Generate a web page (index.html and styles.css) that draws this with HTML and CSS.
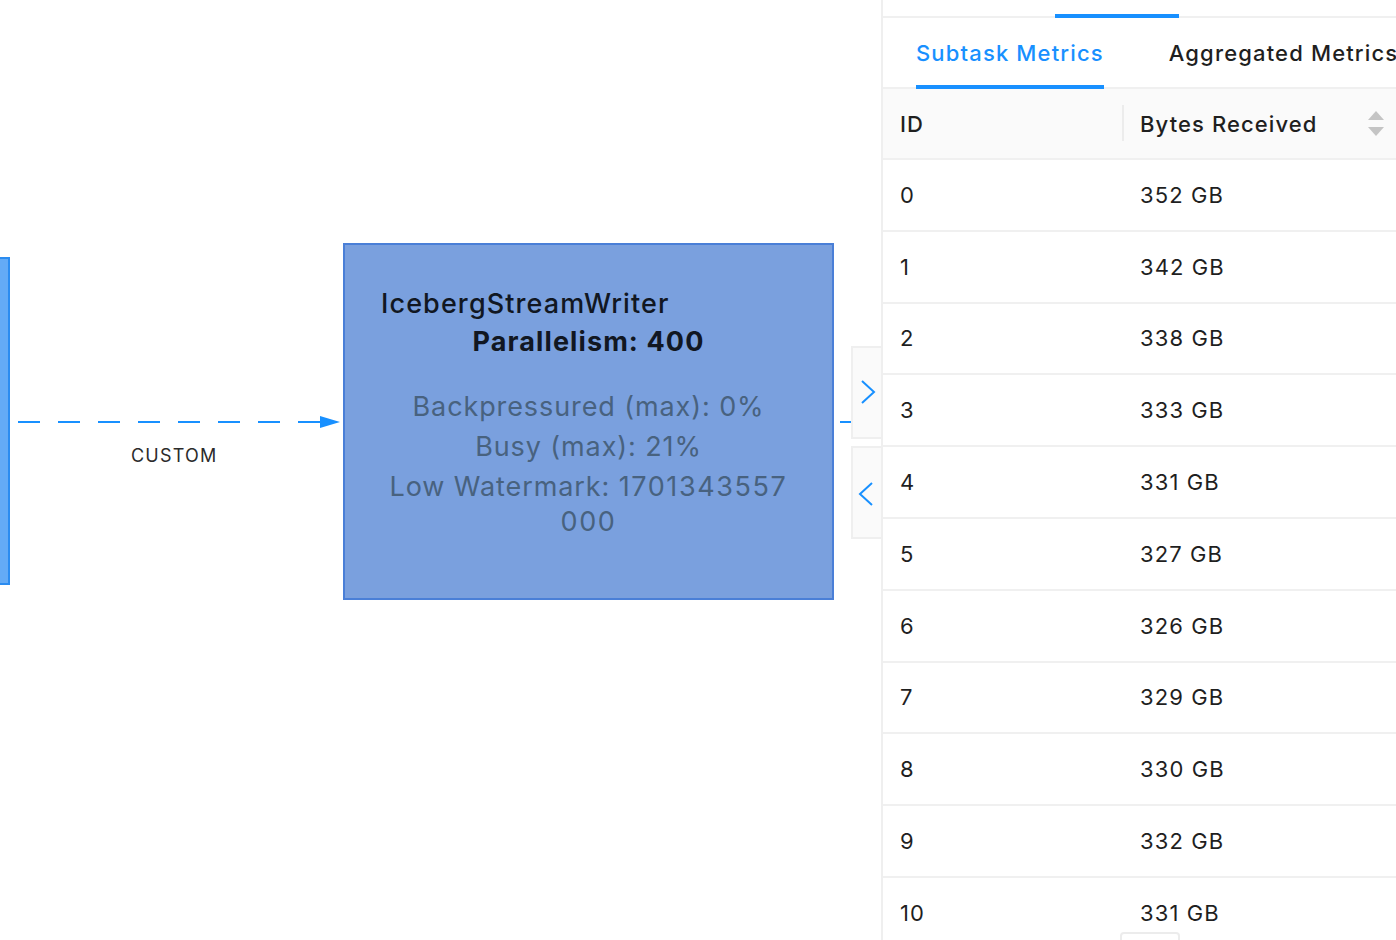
FILE: index.html
```html
<!DOCTYPE html>
<html>
<head>
<meta charset="utf-8">
<link rel="stylesheet" href="styles.css">
</head>
<body>
<div class="app">
  <div class="canvas">
    <div class="node node-prev"></div>
    <svg class="edges" width="881" height="940" viewBox="0 0 881 940">
      <line x1="18" y1="422" x2="324" y2="422" stroke="#1890ff" stroke-width="2" stroke-dasharray="22 18"/>
      <polygon points="320,416 340,422 320,428" fill="#1890ff"/>
      <line x1="840" y1="422" x2="852" y2="422" stroke="#1890ff" stroke-width="2"/>
    </svg>
    <div class="edge-label">CUSTOM</div>
    <div class="node node-main">
      <div class="node-name">IcebergStreamWriter</div>
      <div class="node-par">Parallelism: 400</div>
      <div class="node-metrics">
        <div class="metric">Backpressured (max): 0%</div>
        <div class="metric">Busy (max): 21%</div>
        <div class="metric wm">Low Watermark: <span class="num">1701343557</span><br><span class="num">000</span></div>
      </div>
    </div>
    <div class="toggle toggle-expand">
      <svg width="18" height="26" viewBox="0 0 18 26"><polyline points="3,2 15,13 3,24" fill="none" stroke="#1890ff" stroke-width="2"/></svg>
    </div>
    <div class="toggle toggle-collapse">
      <svg width="18" height="26" viewBox="0 0 18 26"><polyline points="15,2 3,13 15,24" fill="none" stroke="#1890ff" stroke-width="2"/></svg>
    </div>
  </div>
  <div class="panel">
    <div class="tabs-top">
      <div class="ink-top"></div>
    </div>
    <div class="tabs">
      <div class="tab active">Subtask Metrics</div>
      <div class="tab">Aggregated Metrics</div>
    </div>
    <div class="table">
      <div class="thead">
        <div class="cell c-id">ID</div>
        <div class="cell c-bytes">
          <span>Bytes Received</span>
          <span class="sorter">
            <svg width="16" height="26" viewBox="0 0 16 26"><polygon points="8,0 16,9 0,9" fill="#c4c4c4"/><polygon points="0,16 16,16 8,25" fill="#c4c4c4"/></svg>
          </span>
        </div>
      </div>
      <div class="row"><div class="cell c-id">0</div><div class="cell c-bytes">352 GB</div></div>
      <div class="row"><div class="cell c-id">1</div><div class="cell c-bytes">342 GB</div></div>
      <div class="row"><div class="cell c-id">2</div><div class="cell c-bytes">338 GB</div></div>
      <div class="row"><div class="cell c-id">3</div><div class="cell c-bytes">333 GB</div></div>
      <div class="row"><div class="cell c-id">4</div><div class="cell c-bytes">331 GB</div></div>
      <div class="row"><div class="cell c-id">5</div><div class="cell c-bytes">327 GB</div></div>
      <div class="row"><div class="cell c-id">6</div><div class="cell c-bytes">326 GB</div></div>
      <div class="row"><div class="cell c-id">7</div><div class="cell c-bytes">329 GB</div></div>
      <div class="row"><div class="cell c-id">8</div><div class="cell c-bytes">330 GB</div></div>
      <div class="row"><div class="cell c-id">9</div><div class="cell c-bytes">332 GB</div></div>
      <div class="row"><div class="cell c-id">10</div><div class="cell c-bytes">331 GB</div></div>
    </div>
    <div class="scroll-thumb"></div>
  </div>
</div>
</body>
</html>
```
FILE: styles.css
```css
* { box-sizing: border-box; }
html, body { margin: 0; padding: 0; }
body {
  width: 1396px;
  height: 940px;
  overflow: hidden;
  background: #fff;
  font-family: Inter, "Noto Sans", "Liberation Sans", sans-serif;
  color: #222;
}
.app {
  display: flex;
  width: 1396px;
  height: 940px;
}
.canvas {
  position: relative;
  width: 881px;
  height: 940px;
  flex: none;
}
.edges { position: absolute; left: 0; top: 0; }
.node { position: absolute; }
.node-prev {
  left: -10px;
  top: 257px;
  width: 20px;
  height: 328px;
  background: #64abf6;
  border: 2px solid #2b8cf0;
}
.node-main {
  left: 343px;
  top: 243px;
  width: 491px;
  height: 357px;
  background: #7aa0de;
  border: 2px solid #4a7fd7;
  display: flex;
  flex-direction: column;
  padding-top: 42px;
}
.node-name {
  padding-left: 36px;
  font-size: 27px;
  font-weight: 500;
  color: #111722;
  line-height: 34px;
  letter-spacing: 1.1px;
  white-space: nowrap;
}
.node-par {
  text-align: center;
  font-size: 27px;
  font-weight: 700;
  color: #111722;
  line-height: 42px;
  letter-spacing: 1.1px;
}
.node-metrics {
  margin-top: 26px;
  text-align: center;
  color: #48627f;
  font-size: 27px;
  line-height: 35px;
  letter-spacing: 0.9px;
}
.metric { margin-bottom: 5px; }
.num { letter-spacing: 1.6px; }
.edge-label {
  position: absolute;
  left: 131px;
  top: 445px;
  font-size: 18px;
  letter-spacing: 1.2px;
  color: #2b2b2b;
}
.toggle {
  position: absolute;
  left: 851px;
  width: 31px;
  height: 93px;
  background: #fafafa;
  border: 2px solid #efefef;
  border-right: none;
  display: flex;
  align-items: center;
  justify-content: center;
}
.toggle-expand { top: 346px; }
.toggle-collapse { top: 446px; }
.toggle-expand svg { margin-top: -2px; }
.toggle-collapse svg { margin-top: 2px; margin-left: -3px; }

.panel {
  position: relative;
  width: 515px;
  flex: none;
  height: 940px;
  border-left: 2px solid #efefef;
  overflow: hidden;
}
.tabs-top {
  position: relative;
  height: 18px;
  border-bottom: 2px solid #f0f0f0;
}
.ink-top {
  position: absolute;
  left: 172px;
  width: 124px;
  bottom: -2px;
  height: 4px;
  background: #1890ff;
}
.tabs {
  display: flex;
  gap: 65px;
  padding-left: 33px;
  height: 71px;
  border-bottom: 2px solid #f0f0f0;
  white-space: nowrap;
}
.tab {
  position: relative;
  font-size: 22px;
  font-weight: 500;
  color: #1f1f1f;
  line-height: 70px;
  letter-spacing: 1.15px;
}
.tab.active { color: #1890ff; }
.tab.active::after {
  content: "";
  position: absolute;
  left: 0;
  right: 0;
  bottom: -2px;
  height: 4px;
  background: #1890ff;
}
.table { width: 700px; }
.thead {
  display: flex;
  height: 71px;
  background: #fafafa;
  border-bottom: 2px solid #f0f0f0;
  font-weight: 500;
}
.row {
  display: flex;
  height: 71.8px;
  border-bottom: 2px solid #f0f0f0;
}
.cell {
  display: flex;
  align-items: center;
  font-size: 22px;
  color: #1f1f1f;
  letter-spacing: 1.1px;
}
.c-id { width: 239px; padding-left: 17px; }
.c-bytes { flex: 1; padding-left: 18px; position: relative; }
.thead .c-bytes::before {
  content: "";
  position: absolute;
  left: 0;
  top: 16px;
  bottom: 17px;
  width: 2px;
  background: #ececec;
}
.sorter {
  position: absolute;
  left: 246px;
  top: 22px;
  display: flex;
}
.scroll-thumb {
  position: absolute;
  left: 237px;
  top: 932px;
  width: 60px;
  height: 20px;
  border: 2px solid #ececec;
  border-radius: 4px;
  background: #fff;
}
```
